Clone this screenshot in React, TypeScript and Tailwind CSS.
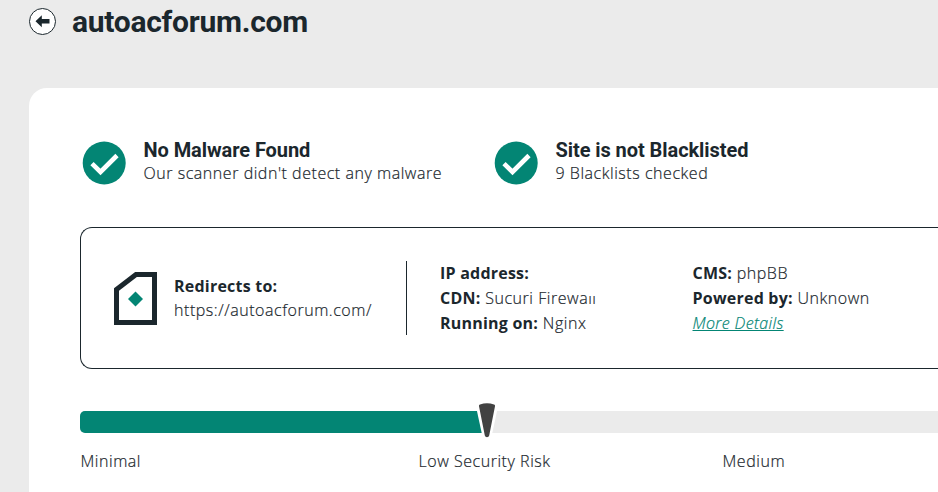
const CheckIcon = () => (
    <svg className="h-11 w-11 shrink-0" viewBox="0 0 44 44">
        <circle cx="22.2" cy="22" r="21.5" fill="#038574" />
        <path d="M10 22.6 L18.5 31 L35 14.5" fill="none" stroke="#fff" strokeWidth="4.6" />
    </svg>
);

const PageIcon = () => (
    <svg className="h-[53px] w-[43px] shrink-0" viewBox="0 0 43 53">
        <path d="M2.5 17.5 L22 2.5 H40.5 V50.5 H2.5 Z" fill="none" stroke="#1b272d" strokeWidth="5" />
        <path d="M21.5 19.5 L29 27 L21.5 34.5 L14 27 Z" fill="#038574" />
    </svg>
);

const Label = ({ children }: { children: string }) => (
    <b className="font-bold tracking-[0.22px] [-webkit-text-stroke:0]">{children}</b>
);

const Status = ({ title, text }: { title: string; text: string }) => (
    <div className="flex">
        <CheckIcon />
        <div className="-mt-[3px] ml-[17.5px]">
            <h2 className="font-['Roboto',sans-serif] text-xl font-bold leading-6 tracking-[-0.07px] [-webkit-text-stroke:0]">{title}</h2>
            <p className="leading-[22px]">{text}</p>
        </div>
    </div>
);

const App = () => {
    return (
        <div className="h-[492px] w-[938px] overflow-hidden whitespace-nowrap bg-[#ebebeb] font-['Open_Sans',sans-serif] text-base font-light tracking-[0.54px] text-[#1b272d]">
            {/* Site name */}
            <header className="flex h-[88px] items-start pl-[29px]">
                <button className="mt-2" aria-label="Back">
                    <svg className="h-[27px] w-[27px]" viewBox="0 0 27 27">
                        <circle cx="13.5" cy="13.5" r="13" fill="#fff" stroke="#1b272d" />
                        <path d="M6.5 13.2 L12.8 7.2 V11 H20.5 V15.4 H12.8 V19.2 Z" fill="#1b272d" />
                    </svg>
                </button>
                <h1 className="ml-4 mt-0.5 font-['Roboto',sans-serif] text-[30px] font-bold leading-10 tracking-[-0.27px]">autoacforum.com</h1>
            </header>

            <main className="ml-[29px] h-[404px] rounded-tl-[18px] bg-white pl-[51px] pt-[53px] [-webkit-text-stroke:0.2px]">
                <div className="grid h-11 grid-cols-[412px_1fr] pl-0.5">
                    <Status title="No Malware Found" text="Our scanner didn't detect any malware" />
                    <Status title="Site is not Blacklisted" text="9 Blacklists checked" />
                </div>

                {/* Site details */}
                <section className="mt-[42px] flex h-[142px] items-center rounded-l-xl border border-r-0 border-[#1b272d] pl-[33px]">
                    <PageIcon />
                    <div className="ml-[17px] w-[232px] leading-6">
                        <p><Label>Redirects to:</Label></p>
                        <p>https://autoacforum.com/</p>
                    </div>
                    <div className="h-[74px] w-px bg-[#1b272d]" />
                    <div className="ml-[33px] w-[252px] leading-[25px]">
                        <p><Label>IP address:</Label></p>
                        <p>
                            <Label>CDN:</Label> Sucuri Firewa<span className="relative">ll<span className="absolute -left-px top-0 h-[9px] w-3 bg-white" /></span>
                        </p>
                        <p><Label>Running on:</Label> Nginx</p>
                    </div>
                    <div className="ml-[0.5px] leading-[25px]">
                        <p><Label>CMS:</Label> phpBB</p>
                        <p><Label>Powered by:</Label> Unknown</p>
                        <a href="#" className="italic tracking-[0.35px] text-[#038574] underline">More Details</a>
                    </div>
                </section>

                {/* Risk meter */}
                <div className="relative mt-[42px] h-[22px] rounded-l-[5px] bg-[#ebebeb]">
                    <div className="h-full w-[407px] rounded-l-[5px] bg-[#038574]" />
                    <svg className="absolute -top-[9px] left-[395px] h-[37px] w-6" viewBox="0 0 24 37">
                        <path d="M0 0 H24 L16 37 H8 Z" fill="#fff" />
                        <path d="M5 2.4 Q12 0 19 2.4 Q20.3 2.6 20 4.2 L14.2 33.5 Q13.8 35.3 12 35.3 Q10.2 35.3 9.8 33.5 L4 4.2 Q3.7 2.6 5 2.4 Z" fill="#424242" />
                    </svg>
                </div>
                <div className="mt-4 grid grid-cols-[338px_304px_1fr] pl-[0.5px] leading-6">
                    <span>Minimal</span>
                    <span>Low Security Risk</span>
                    <span>Medium</span>
                </div>
            </main>
        </div>
    );
};

export default App;
